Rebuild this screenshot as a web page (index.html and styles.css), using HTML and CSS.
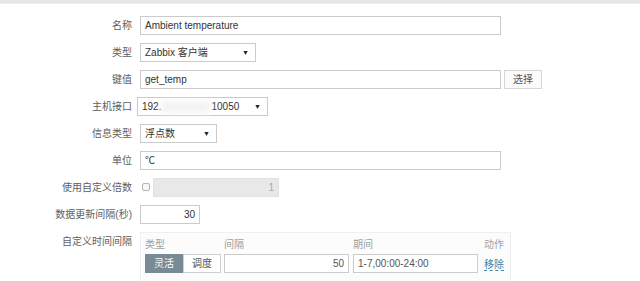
FILE: index.html
```
<!DOCTYPE html>
<html lang="zh-CN">
<head>
    <meta charset="UTF-8">
    <title>监控项</title>
    <link rel="stylesheet" href="styles.css">
</head>
<body>
    <div class="top-bar"></div>
    <div class="form">
        <label class="lbl">名称</label>
        <div class="field"><div class="input wide">Ambient temperature</div></div>

        <label class="lbl">类型</label>
        <div class="field"><div class="select w-type"><span>Zabbix 客户端</span><span class="arrow">▼</span></div></div>

        <label class="lbl">键值</label>
        <div class="field">
            <div class="input wide">get_temp</div>
            <div class="btn">选择</div>
        </div>

        <label class="lbl">主机接口</label>
        <div class="field"><div class="select w-host"><span>192.<span class="blur"></span>10050</span><span class="arrow">▼</span></div></div>

        <label class="lbl">信息类型</label>
        <div class="field"><div class="select w-info"><span>浮点数</span><span class="arrow">▼</span></div></div>

        <label class="lbl">单位</label>
        <div class="field"><div class="input wide">℃</div></div>

        <label class="lbl">使用自定义倍数</label>
        <div class="field">
            <span class="checkbox"></span>
            <div class="input disabled num w-mult">1</div>
        </div>

        <label class="lbl">数据更新间隔(秒)</label>
        <div class="field"><div class="input num w-delay">30</div></div>

        <label class="lbl">自定义时间间隔</label>
        <div class="field">
            <div class="interval-box">
                <div class="iv-row iv-head">
                    <span class="c-type">类型</span>
                    <span class="c-int">间隔</span>
                    <span class="c-per">期间</span>
                    <span class="c-act">动作</span>
                </div>
                <div class="iv-row">
                    <div class="c-type seg">
                        <span class="seg-btn active">灵活</span><span class="seg-btn">调度</span>
                    </div>
                    <div class="c-int input num">50</div>
                    <div class="c-per input">1-7,00:00-24:00</div>
                    <span class="c-act link">移除</span>
                </div>
            </div>
        </div>
    </div>
</body>
</html>
```

FILE: styles.css
```
body {
    margin: 0;
    padding: 0;
    background: #fff;
    font-family: "Liberation Sans", Arial, "Noto Sans CJK SC", sans-serif;
    font-size: 10px;
    color: #333;
    overflow: hidden;
}
.top-bar {
    height: 3px;
    background: #e6e6e6;
    border-bottom: 1px solid #efefef;
}
.form {
    display: grid;
    grid-template-columns: 132px 1fr;
    column-gap: 8px;
    row-gap: 8px;
    padding-top: 12px;
}
.lbl {
    text-align: right;
    color: #5e5e5e;
    line-height: 19px;
    height: 19px;
}
.field {
    display: flex;
    align-items: flex-start;
    gap: 3px;
}
.input, .select {
    box-sizing: border-box;
    height: 19px;
    line-height: 17px;
    border: 1px solid #cbcbcb;
    background: #fff;
    padding: 0 4px;
    white-space: nowrap;
}
.wide { width: 361px; }
.num { text-align: right; }
.select {
    display: flex;
    justify-content: space-between;
    padding-right: 6px;
}
.arrow {
    font-size: 7px;
    color: #222;
}
.w-type { width: 116px; }
.w-host { width: 131px; margin-left: -3px; }
.w-info { width: 77px; }
.blur {
    display: inline-block;
    width: 50px;
    height: 12px;
    vertical-align: middle;
    background: #f3f3f3;
    filter: blur(3px);
}
.btn {
    box-sizing: border-box;
    height: 19px;
    line-height: 17px;
    width: 38px;
    text-align: center;
    border: 1px solid #d6d6d6;
    background: #fbfbfb;
    color: #555;
}
.checkbox {
    box-sizing: border-box;
    width: 8px;
    height: 8px;
    border: 1px solid #b5b5b5;
    border-radius: 2px;
    margin: 5px 0 0 2px;
    background: #f6f6f6;
}
.disabled {
    background: #e8e8e8;
    border-color: #e2e2e2;
    color: #aaa;
}
.w-mult { width: 126px; }
.w-delay { width: 60px; }
.interval-box {
    box-sizing: border-box;
    width: 371px;
    height: 60px;
    background: #fcfcfc;
    border: 1px solid #efefef;
    padding: 2px 6px 0 4px;
}
.iv-row {
    display: flex;
    align-items: center;
}
.iv-head {
    height: 17px;
    color: #a0a0a0;
    margin-bottom: 2px;
}
.c-type { width: 79px; flex: none; }
.c-int { width: 125px; margin-right: 4px; flex: none; }
.c-per { width: 125px; flex: none; }
.c-act { flex: 1; text-align: right; }
.iv-row .input { height: 19px; color: #555; }
.seg {
    display: flex;
}
.seg-btn {
    box-sizing: border-box;
    width: 38px;
    height: 19px;
    line-height: 17px;
    text-align: center;
    border: 1px solid #cfcfcf;
    background: #fff;
    color: #555;
}
.seg-btn.active {
    background: #778a96;
    border-color: #778a96;
    color: #fff;
}
.link {
    color: #3d86a8;
    text-decoration: underline dashed;
    text-underline-offset: 2px;
}
```
